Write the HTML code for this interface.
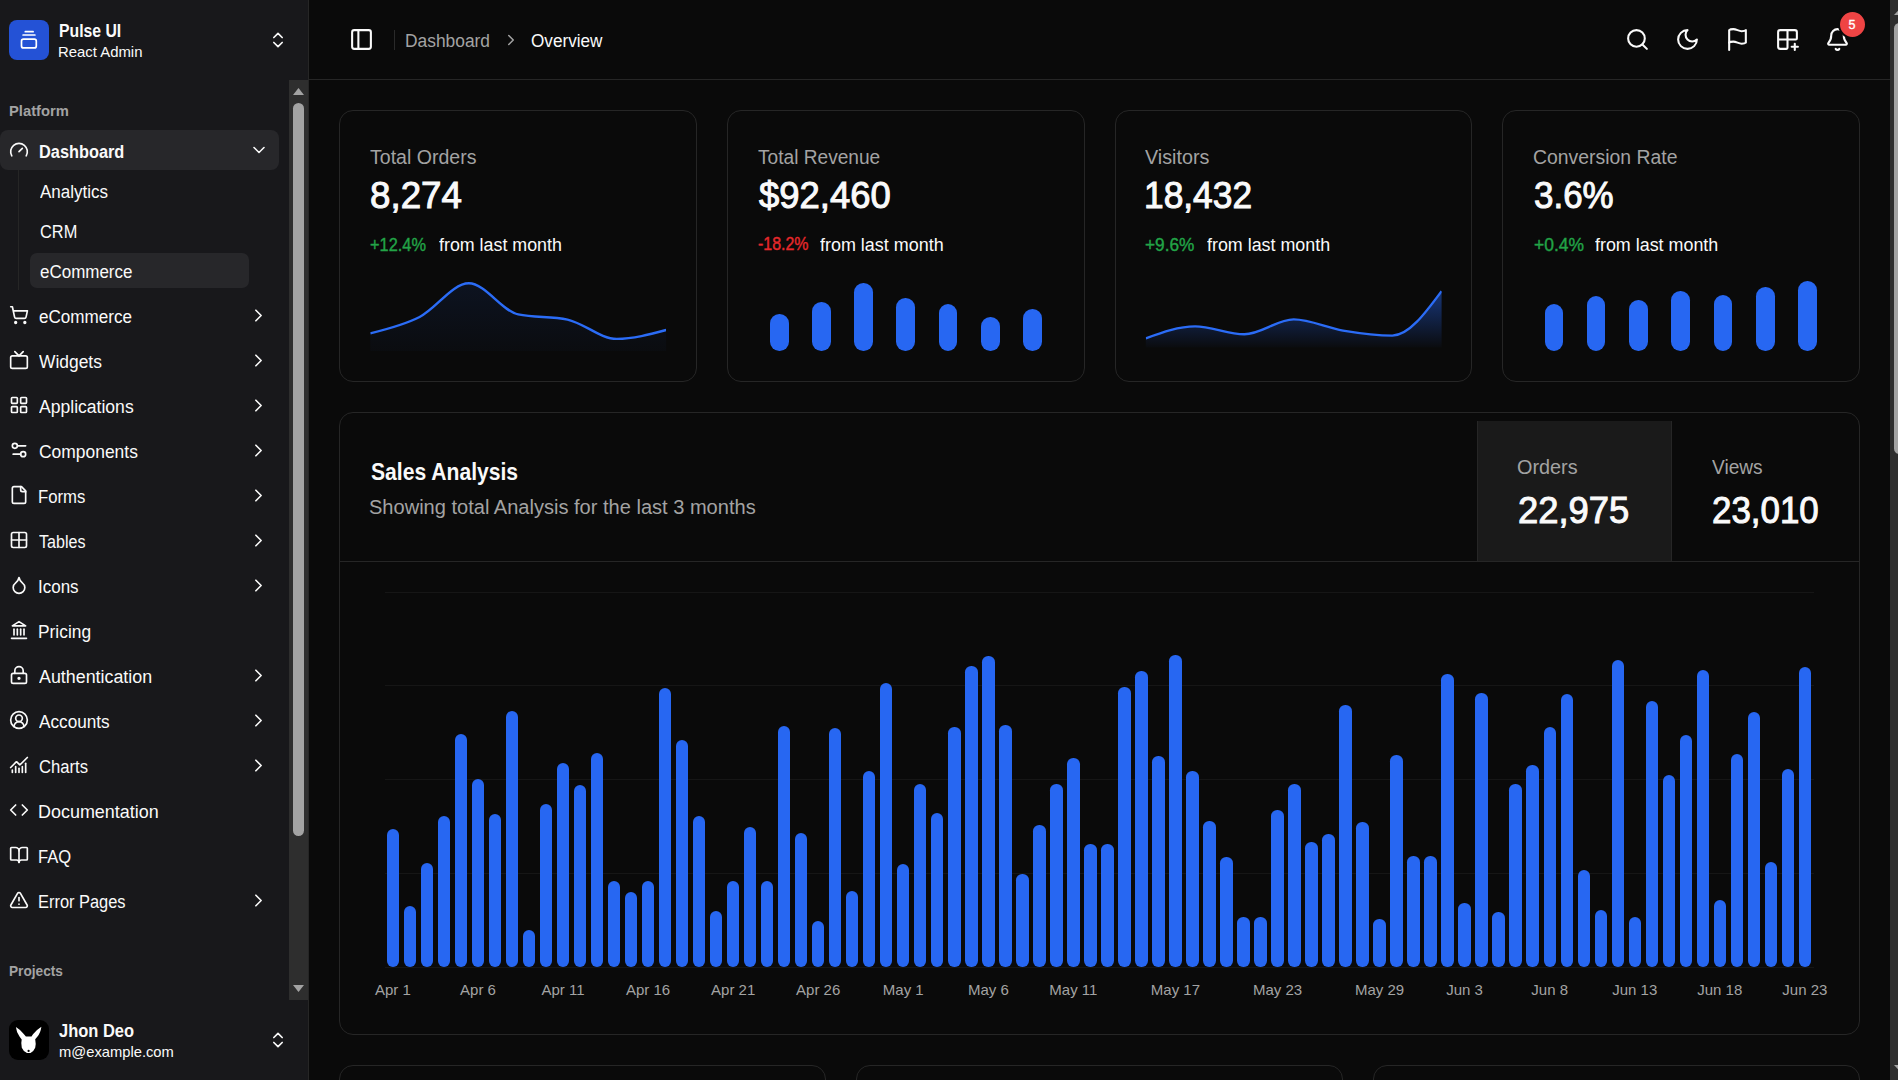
<!DOCTYPE html>
<html><head><meta charset="utf-8"><style>
html,body{margin:0;padding:0;width:1898px;height:1080px;overflow:hidden;background:#0a0a0a;}
body{position:relative;font-family:"Liberation Sans",sans-serif;}
.t{position:absolute;line-height:1;white-space:nowrap;transform-origin:0 0;}
.r{position:absolute;box-sizing:border-box;}
svg.r{overflow:visible;}
</style></head><body>
<div class="r" style="left:0px;top:0px;width:308px;height:1080px;background:#18181b;border-radius:0px;"></div>
<div class="r" style="left:308px;top:0px;width:1px;height:1080px;background:#262626;border-radius:0px;"></div>
<div class="r" style="left:9px;top:20px;width:40px;height:40px;background:#2452d6;border-radius:8px;"></div>
<svg class="r" style="left:0;top:0" width="60" height="70" fill="none" stroke="#fff" stroke-width="1.7" stroke-linecap="round"><path d="M25.3 31.7H33.1"/><path d="M23.1 35H34.9"/><rect x="21.5" y="39.2" width="14.8" height="8.7" rx="2"/></svg>
<div id="logo1" class="t" style="left:59.10px;top:21.56px;font-size:18px;font-weight:700;color:#fafafa;transform:scaleX(0.8763);">Pulse UI</div>
<div id="logo2" class="t" style="left:57.97px;top:45.33px;font-size:14.5px;font-weight:400;color:#fafafa;transform:scaleX(1.0274);">React Admin</div>
<svg class="r" style="left:268.1px;top:30px;" width="20" height="20" viewBox="0 0 24 24" fill="none" stroke="#fafafa" stroke-width="2" stroke-linecap="round" stroke-linejoin="round"><path d="m7 15 5 5 5-5"/><path d="m7 9 5-5 5 5"/></svg>
<div id="plat" class="t" style="left:8.82px;top:103.30px;font-size:15px;font-weight:700;color:#a3a3a3;transform:scaleX(0.9833);">Platform</div>
<div class="r" style="left:0px;top:130px;width:279px;height:40px;background:#27272a;border-radius:8px;"></div>
<svg class="r" style="left:9px;top:140px;" width="20" height="20" viewBox="0 0 24 24" fill="none" stroke="#fafafa" stroke-width="2" stroke-linecap="round" stroke-linejoin="round"><path d="m12 14 4-4"/><path d="M3.34 19a10 10 0 1 1 17.32 0"/></svg>
<div id="dash" class="t" style="left:39.43px;top:142.76px;font-size:18px;font-weight:700;color:#fafafa;transform:scaleX(0.9077);">Dashboard</div>
<svg class="r" style="left:249px;top:139.9px;" width="20" height="20" viewBox="0 0 24 24" fill="none" stroke="#fafafa" stroke-width="1.9" stroke-linecap="round" stroke-linejoin="round"><path d="m6 9 6 6 6-6"/></svg>
<div class="r" style="left:18px;top:170px;width:1px;height:120px;background:#262626;border-radius:0px;"></div>
<div id="an" class="t" style="left:39.88px;top:182.76px;font-size:18px;font-weight:400;color:#fafafa;transform:scaleX(0.9444);">Analytics</div>
<div id="crm" class="t" style="left:39.97px;top:222.76px;font-size:18px;font-weight:400;color:#fafafa;transform:scaleX(0.9095);">CRM</div>
<div class="r" style="left:30px;top:253px;width:219px;height:35px;background:#27272a;border-radius:7px;"></div>
<div id="ecs" class="t" style="left:39.88px;top:262.76px;font-size:18px;font-weight:400;color:#fafafa;transform:scaleX(0.9430);">eCommerce</div>
<svg class="r" style="left:9px;top:305px;" width="20" height="20" viewBox="0 0 24 24" fill="none" stroke="#fafafa" stroke-width="2" stroke-linecap="round" stroke-linejoin="round"><circle cx="8" cy="21" r="1"/><circle cx="19" cy="21" r="1"/><path d="M2.05 2.05h2l2.66 12.42a2 2 0 0 0 2 1.58h9.78a2 2 0 0 0 1.95-1.57l1.65-7.43H5.12"/></svg>
<div id="nav0" class="t" style="left:39.30px;top:307.76px;font-size:18px;font-weight:400;color:#fafafa;transform:scaleX(0.9491);">eCommerce</div>
<svg class="r" style="left:248.2px;top:304.75px;" width="21" height="21" viewBox="0 0 24 24" fill="none" stroke="#fafafa" stroke-width="1.9" stroke-linecap="round" stroke-linejoin="round"><path d="m9 18 6-6-6-6"/></svg>
<svg class="r" style="left:9px;top:350px;" width="20" height="20" viewBox="0 0 24 24" fill="none" stroke="#fafafa" stroke-width="2" stroke-linecap="round" stroke-linejoin="round"><rect width="20" height="15" x="2" y="7" rx="2" ry="2"/><polyline points="17 2 12 7 7 2"/></svg>
<div id="nav1" class="t" style="left:39.30px;top:352.76px;font-size:18px;font-weight:400;color:#fafafa;transform:scaleX(0.9665);">Widgets</div>
<svg class="r" style="left:248.2px;top:349.75px;" width="21" height="21" viewBox="0 0 24 24" fill="none" stroke="#fafafa" stroke-width="1.9" stroke-linecap="round" stroke-linejoin="round"><path d="m9 18 6-6-6-6"/></svg>
<svg class="r" style="left:9px;top:395px;" width="20" height="20" viewBox="0 0 24 24" fill="none" stroke="#fafafa" stroke-width="2" stroke-linecap="round" stroke-linejoin="round"><rect width="7" height="7" x="3" y="3" rx="1"/><rect width="7" height="7" x="14" y="3" rx="1"/><rect width="7" height="7" x="14" y="14" rx="1"/><rect width="7" height="7" x="3" y="14" rx="1"/></svg>
<div id="nav2" class="t" style="left:39.29px;top:397.76px;font-size:18px;font-weight:400;color:#fafafa;transform:scaleX(0.9753);">Applications</div>
<svg class="r" style="left:248.2px;top:394.75px;" width="21" height="21" viewBox="0 0 24 24" fill="none" stroke="#fafafa" stroke-width="1.9" stroke-linecap="round" stroke-linejoin="round"><path d="m9 18 6-6-6-6"/></svg>
<svg class="r" style="left:9px;top:440px;" width="20" height="20" viewBox="0 0 24 24" fill="none" stroke="#fafafa" stroke-width="2" stroke-linecap="round" stroke-linejoin="round"><path d="M20 7h-9"/><path d="M14 17H5"/><circle cx="17" cy="17" r="3"/><circle cx="7" cy="7" r="3"/></svg>
<div id="nav3" class="t" style="left:39.30px;top:442.76px;font-size:18px;font-weight:400;color:#fafafa;transform:scaleX(0.9688);">Components</div>
<svg class="r" style="left:248.2px;top:439.75px;" width="21" height="21" viewBox="0 0 24 24" fill="none" stroke="#fafafa" stroke-width="1.9" stroke-linecap="round" stroke-linejoin="round"><path d="m9 18 6-6-6-6"/></svg>
<svg class="r" style="left:9px;top:485px;" width="20" height="20" viewBox="0 0 24 24" fill="none" stroke="#fafafa" stroke-width="2" stroke-linecap="round" stroke-linejoin="round"><path d="M15 2H6a2 2 0 0 0-2 2v16a2 2 0 0 0 2 2h12a2 2 0 0 0 2-2V7Z"/><path d="M14 2v4a2 2 0 0 0 2 2h4"/></svg>
<div id="nav4" class="t" style="left:38.36px;top:487.76px;font-size:18px;font-weight:400;color:#fafafa;transform:scaleX(0.9285);">Forms</div>
<svg class="r" style="left:248.2px;top:484.75px;" width="21" height="21" viewBox="0 0 24 24" fill="none" stroke="#fafafa" stroke-width="1.9" stroke-linecap="round" stroke-linejoin="round"><path d="m9 18 6-6-6-6"/></svg>
<svg class="r" style="left:9px;top:530px;" width="20" height="20" viewBox="0 0 24 24" fill="none" stroke="#fafafa" stroke-width="2" stroke-linecap="round" stroke-linejoin="round"><rect width="18" height="18" x="3" y="3" rx="2"/><path d="M3 12h18"/><path d="M12 3v18"/></svg>
<div id="nav5" class="t" style="left:39.29px;top:532.76px;font-size:18px;font-weight:400;color:#fafafa;transform:scaleX(0.8928);">Tables</div>
<svg class="r" style="left:248.2px;top:529.75px;" width="21" height="21" viewBox="0 0 24 24" fill="none" stroke="#fafafa" stroke-width="1.9" stroke-linecap="round" stroke-linejoin="round"><path d="m9 18 6-6-6-6"/></svg>
<svg class="r" style="left:9px;top:575px;" width="20" height="20" viewBox="0 0 24 24" fill="none" stroke="#fafafa" stroke-width="2" stroke-linecap="round" stroke-linejoin="round"><path d="M12 22a7 7 0 0 0 7-7c0-2-1-3.9-3-5.5s-3.5-4-4-6.5c-.5 2.5-2 4.9-4 6.5C6 11.1 5 13 5 15a7 7 0 0 0 7 7z"/></svg>
<div id="nav6" class="t" style="left:38.36px;top:577.76px;font-size:18px;font-weight:400;color:#fafafa;transform:scaleX(0.9434);">Icons</div>
<svg class="r" style="left:248.2px;top:574.75px;" width="21" height="21" viewBox="0 0 24 24" fill="none" stroke="#fafafa" stroke-width="1.9" stroke-linecap="round" stroke-linejoin="round"><path d="m9 18 6-6-6-6"/></svg>
<svg class="r" style="left:9px;top:620px;" width="20" height="20" viewBox="0 0 24 24" fill="none" stroke="#fafafa" stroke-width="2" stroke-linecap="round" stroke-linejoin="round"><line x1="3" x2="21" y1="22" y2="22"/><line x1="6" x2="6" y1="18" y2="11"/><line x1="10" x2="10" y1="18" y2="11"/><line x1="14" x2="14" y1="18" y2="11"/><line x1="18" x2="18" y1="18" y2="11"/><polygon points="12 2 20 7 4 7"/></svg>
<div id="nav7" class="t" style="left:38.32px;top:622.76px;font-size:18px;font-weight:400;color:#fafafa;transform:scaleX(0.9640);">Pricing</div>
<svg class="r" style="left:9px;top:665px;" width="20" height="20" viewBox="0 0 24 24" fill="none" stroke="#fafafa" stroke-width="2" stroke-linecap="round" stroke-linejoin="round"><circle cx="12" cy="16" r="1"/><rect x="3" y="10" width="18" height="12" rx="2"/><path d="M7 10V7a5 5 0 0 1 10 0v3"/></svg>
<div id="nav8" class="t" style="left:39.30px;top:667.76px;font-size:18px;font-weight:400;color:#fafafa;transform:scaleX(0.9912);">Authentication</div>
<svg class="r" style="left:248.2px;top:664.75px;" width="21" height="21" viewBox="0 0 24 24" fill="none" stroke="#fafafa" stroke-width="1.9" stroke-linecap="round" stroke-linejoin="round"><path d="m9 18 6-6-6-6"/></svg>
<svg class="r" style="left:9px;top:710px;" width="20" height="20" viewBox="0 0 24 24" fill="none" stroke="#fafafa" stroke-width="2" stroke-linecap="round" stroke-linejoin="round"><path d="M18 20a6 6 0 0 0-12 0"/><circle cx="12" cy="10" r="4"/><circle cx="12" cy="12" r="10"/></svg>
<div id="nav9" class="t" style="left:39.30px;top:712.76px;font-size:18px;font-weight:400;color:#fafafa;transform:scaleX(0.9543);">Accounts</div>
<svg class="r" style="left:248.2px;top:709.75px;" width="21" height="21" viewBox="0 0 24 24" fill="none" stroke="#fafafa" stroke-width="1.9" stroke-linecap="round" stroke-linejoin="round"><path d="m9 18 6-6-6-6"/></svg>
<svg class="r" style="left:9px;top:755px;" width="20" height="20" viewBox="0 0 24 24" fill="none" stroke="#fafafa" stroke-width="2" stroke-linecap="round" stroke-linejoin="round"><path d="M12 16v5"/><path d="M16 14v7"/><path d="M20 10v11"/><path d="m22 3-8.646 8.646a.5.5 0 0 1-.708 0L9.354 8.354a.5.5 0 0 0-.707 0L2 15"/><path d="M4 18v3"/><path d="M8 14v7"/></svg>
<div id="nav10" class="t" style="left:39.29px;top:757.76px;font-size:18px;font-weight:400;color:#fafafa;transform:scaleX(0.9245);">Charts</div>
<svg class="r" style="left:248.2px;top:754.75px;" width="21" height="21" viewBox="0 0 24 24" fill="none" stroke="#fafafa" stroke-width="1.9" stroke-linecap="round" stroke-linejoin="round"><path d="m9 18 6-6-6-6"/></svg>
<svg class="r" style="left:9px;top:800px;" width="20" height="20" viewBox="0 0 24 24" fill="none" stroke="#fafafa" stroke-width="2" stroke-linecap="round" stroke-linejoin="round"><polyline points="16 18 22 12 16 6"/><polyline points="8 6 2 12 8 18"/></svg>
<div id="nav11" class="t" style="left:38.30px;top:802.76px;font-size:18px;font-weight:400;color:#fafafa;transform:scaleX(0.9967);">Documentation</div>
<svg class="r" style="left:9px;top:845px;" width="20" height="20" viewBox="0 0 24 24" fill="none" stroke="#fafafa" stroke-width="2" stroke-linecap="round" stroke-linejoin="round"><path d="M12 7v14"/><path d="M3 18a1 1 0 0 1-1-1V4a1 1 0 0 1 1-1h5a4 4 0 0 1 4 4 4 4 0 0 1 4-4h5a1 1 0 0 1 1 1v13a1 1 0 0 1-1 1h-6a3 3 0 0 0-3 3 3 3 0 0 0-3-3z"/></svg>
<div id="nav12" class="t" style="left:38.37px;top:847.76px;font-size:18px;font-weight:400;color:#fafafa;transform:scaleX(0.9204);">FAQ</div>
<svg class="r" style="left:9px;top:890px;" width="20" height="20" viewBox="0 0 24 24" fill="none" stroke="#fafafa" stroke-width="2" stroke-linecap="round" stroke-linejoin="round"><path d="m21.73 18-8-14a2 2 0 0 0-3.48 0l-8 14A2 2 0 0 0 4 21h16a2 2 0 0 0 1.73-3"/><path d="M12 9v4"/><path d="M12 17h.01"/></svg>
<div id="nav13" class="t" style="left:38.38px;top:892.76px;font-size:18px;font-weight:400;color:#fafafa;transform:scaleX(0.9117);">Error Pages</div>
<svg class="r" style="left:248.2px;top:889.75px;" width="21" height="21" viewBox="0 0 24 24" fill="none" stroke="#fafafa" stroke-width="1.9" stroke-linecap="round" stroke-linejoin="round"><path d="m9 18 6-6-6-6"/></svg>
<div id="proj" class="t" style="left:9.07px;top:963.30px;font-size:15px;font-weight:700;color:#a3a3a3;transform:scaleX(0.9109);">Projects</div>
<div class="r" style="left:289px;top:80px;width:19px;height:920px;background:#2e2e2e;border-radius:0px;"></div>
<svg class="r" style="left:289px;top:80px" width="19" height="20"><polygon points="4,15 9.5,8 15,15" fill="#a3a3a3"/></svg>
<div class="r" style="left:293px;top:103px;width:11px;height:733px;background:#a3a3a3;border-radius:6px;"></div>
<svg class="r" style="left:289px;top:980px" width="19" height="20"><polygon points="4,5 9.5,12 15,5" fill="#a3a3a3"/></svg>
<div class="r" style="left:9.4px;top:1020.1px;width:39.4px;height:39.6px;background:#000;border-radius:9px;"></div>
<svg class="r" style="left:9.4px;top:1020.1px" width="40" height="40"><path d="M6.9,6.9 Q12,10 14.5,13.8 L16.9,16.6 L22.5,16.6 L24,14.2 Q28,9.5 32.4,6.8 Q31.5,13 28.5,16.5 L26.2,19.2 Q27.2,24 26.2,27.8 Q24.5,31.8 21.5,33.1 L18,33.1 Q14.5,31.8 12.8,27.8 Q11.8,23 12.7,19.5 L10.5,16.5 Q7.5,12.5 6.9,6.9 Z" fill="#fff"/><circle cx="19.6" cy="30.9" r="1.1" fill="#000"/></svg>
<div id="user1" class="t" style="left:59.00px;top:1021.76px;font-size:18px;font-weight:700;color:#fafafa;transform:scaleX(0.9146);">Jhon Deo</div>
<div id="user2" class="t" style="left:59.00px;top:1045.13px;font-size:14.5px;font-weight:400;color:#fafafa;transform:scaleX(1.0160);">m@example.com</div>
<svg class="r" style="left:267.9px;top:1030.2px;" width="20" height="20" viewBox="0 0 24 24" fill="none" stroke="#fafafa" stroke-width="2" stroke-linecap="round" stroke-linejoin="round"><path d="m7 15 5 5 5-5"/><path d="m7 9 5-5 5 5"/></svg>
<div class="r" style="left:309px;top:79px;width:1581px;height:1px;background:#262626;border-radius:0px;"></div>
<svg class="r" style="left:349px;top:27px;" width="25" height="25" viewBox="0 0 24 24" fill="none" stroke="#fafafa" stroke-width="2" stroke-linecap="round" stroke-linejoin="round"><rect width="18" height="18" x="3" y="3" rx="2"/><path d="M9 3v18"/></svg>
<div class="r" style="left:394px;top:30px;width:1px;height:20px;background:#2a2a2a;border-radius:0px;"></div>
<div id="bc1" class="t" style="left:405.03px;top:31.76px;font-size:18px;font-weight:400;color:#a3a3a3;transform:scaleX(0.9651);">Dashboard</div>
<svg class="r" style="left:502px;top:30.6px;" width="18" height="18" viewBox="0 0 24 24" fill="none" stroke="#a3a3a3" stroke-width="2" stroke-linecap="round" stroke-linejoin="round"><path d="m9 18 6-6-6-6"/></svg>
<div id="bc2" class="t" style="left:531.41px;top:31.76px;font-size:18px;font-weight:400;color:#fafafa;transform:scaleX(0.9522);">Overview</div>
<svg class="r" style="left:1625.0px;top:27px;" width="25" height="25" viewBox="0 0 24 24" fill="none" stroke="#fafafa" stroke-width="2" stroke-linecap="round" stroke-linejoin="round"><circle cx="11" cy="11" r="8"/><path d="m21 21-4.3-4.3"/></svg>
<svg class="r" style="left:1675.0px;top:27px;" width="25" height="25" viewBox="0 0 24 24" fill="none" stroke="#fafafa" stroke-width="2" stroke-linecap="round" stroke-linejoin="round"><path d="M12 3a6 6 0 0 0 9 9 9 9 0 1 1-9-9Z"/></svg>
<svg class="r" style="left:1724.5px;top:27px;" width="25" height="25" viewBox="0 0 24 24" fill="none" stroke="#fafafa" stroke-width="2" stroke-linecap="round" stroke-linejoin="round"><path d="M4 15s1-1 4-1 5 2 8 2 4-1 4-1V3s-1 1-4 1-5-2-8-2-4 1-4 1z"/><path d="M4 22v-7"/></svg>
<svg class="r" style="left:1774.5px;top:27px;" width="25" height="25" viewBox="0 0 24 24" fill="none" stroke="#fafafa" stroke-width="2" stroke-linecap="round" stroke-linejoin="round"><path d="M12 3v17a1 1 0 0 1-1 1H5a2 2 0 0 1-2-2V5a2 2 0 0 1 2-2h14a2 2 0 0 1 2 2v6a1 1 0 0 1-1 1H3"/><path d="M16 19h6"/><path d="M19 22v-6"/></svg>
<svg class="r" style="left:1825.0px;top:27px;" width="25" height="25" viewBox="0 0 24 24" fill="none" stroke="#fafafa" stroke-width="2" stroke-linecap="round" stroke-linejoin="round"><path d="M10.268 21a2 2 0 0 0 3.464 0"/><path d="M3.262 15.326A1 1 0 0 0 4 17h16a1 1 0 0 0 .74-1.673C19.41 13.956 18 12.499 18 8A6 6 0 0 0 6 8c0 4.499-1.411 5.956-2.738 7.326"/></svg>
<div class="r" style="left:1838px;top:10px;width:29px;height:29px;border-radius:50%;background:#ef4444;border:2px solid #0a0a0a;"></div>
<div id="badge" class="t" style="left:1848.40px;top:18.62px;font-size:12.5px;font-weight:400;color:#fff;-webkit-text-stroke:0.35px #fff;">5</div>
<div class="r" style="left:1890px;top:0px;width:8px;height:1080px;background:#2e2e2e;border-radius:0px;"></div>
<div class="r" style="left:1894px;top:23px;width:11px;height:431px;background:#a3a3a3;border-radius:6px;"></div>
<svg class="r" style="left:1890px;top:0px" width="8" height="1080"><polygon points="4,15 9.5,9 15,15" fill="#a3a3a3"/><polygon points="4,1065 9.5,1071 15,1065" fill="#a3a3a3"/></svg>
<div class="r" style="left:339.00px;top:110px;width:357.75px;height:272px;border:1px solid #262626;border-radius:14px;"></div>
<div class="r" style="left:726.75px;top:110px;width:357.75px;height:272px;border:1px solid #262626;border-radius:14px;"></div>
<div class="r" style="left:1114.50px;top:110px;width:357.75px;height:272px;border:1px solid #262626;border-radius:14px;"></div>
<div class="r" style="left:1502.25px;top:110px;width:357.75px;height:272px;border:1px solid #262626;border-radius:14px;"></div>
<div id="st0" class="t" style="left:370.21px;top:148.49px;font-size:19.5px;font-weight:400;color:#a3a3a3;transform:scaleX(1.0020);">Total Orders</div>
<div id="sv0" class="t" style="left:370.21px;top:177.08px;font-size:37px;font-weight:400;color:#fafafa;transform:scaleX(0.9925);-webkit-text-stroke:1px #fafafa;">8,274</div>
<div id="sd0" class="t" style="left:370.25px;top:236.36px;font-size:18px;font-weight:400;color:#22a447;transform:scaleX(0.9086);-webkit-text-stroke:0.4px #22a447;">+12.4%</div>
<div id="sf0" class="t" style="left:439.38px;top:236.36px;font-size:18px;font-weight:400;color:#fafafa;transform:scaleX(0.9905);">from last month</div>
<div id="st1" class="t" style="left:758.00px;top:148.49px;font-size:19.5px;font-weight:400;color:#a3a3a3;transform:scaleX(0.9807);">Total Revenue</div>
<div id="sv1" class="t" style="left:759.01px;top:177.08px;font-size:37px;font-weight:400;color:#fafafa;transform:scaleX(0.9858);-webkit-text-stroke:1px #fafafa;">$92,460</div>
<div id="sd1" class="t" style="left:758.09px;top:235.36px;font-size:18px;font-weight:400;color:#e5282b;transform:scaleX(0.8865);-webkit-text-stroke:0.4px #e5282b;">-18.2%</div>
<div id="sf1" class="t" style="left:820.38px;top:236.36px;font-size:18px;font-weight:400;color:#fafafa;transform:scaleX(0.9969);">from last month</div>
<div id="st2" class="t" style="left:1145.40px;top:148.49px;font-size:19.5px;font-weight:400;color:#a3a3a3;transform:scaleX(1.0128);">Visitors</div>
<div id="sv2" class="t" style="left:1144.46px;top:177.08px;font-size:37px;font-weight:400;color:#fafafa;transform:scaleX(0.9550);-webkit-text-stroke:1px #fafafa;">18,432</div>
<div id="sd2" class="t" style="left:1145.41px;top:236.36px;font-size:18px;font-weight:400;color:#22a447;transform:scaleX(0.9570);-webkit-text-stroke:0.4px #22a447;">+9.6%</div>
<div id="sf2" class="t" style="left:1207.00px;top:236.36px;font-size:18px;font-weight:400;color:#fafafa;transform:scaleX(0.9921);">from last month</div>
<div id="st3" class="t" style="left:1532.80px;top:148.49px;font-size:19.5px;font-weight:400;color:#a3a3a3;transform:scaleX(0.9945);">Conversion Rate</div>
<div id="sv3" class="t" style="left:1533.83px;top:177.08px;font-size:37px;font-weight:400;color:#fafafa;transform:scaleX(0.9447);-webkit-text-stroke:1px #fafafa;">3.6%</div>
<div id="sd3" class="t" style="left:1533.82px;top:236.36px;font-size:18px;font-weight:400;color:#22a447;transform:scaleX(0.9690);-webkit-text-stroke:0.4px #22a447;">+0.4%</div>
<div id="sf3" class="t" style="left:1595.09px;top:236.36px;font-size:18px;font-weight:400;color:#fafafa;transform:scaleX(0.9936);">from last month</div>
<svg class="r" style="left:0;top:0" width="1898" height="400"><defs><linearGradient id="g1" x1="0" y1="0" x2="0" y2="1"><stop offset="0%" stop-color="#2563eb" stop-opacity="0.1"/><stop offset="100%" stop-color="#2563eb" stop-opacity="0.025"/></linearGradient><clipPath id="cg1"><rect x="370.3" y="200" width="295.8" height="200"/></clipPath></defs><path d="M370.30,333.30 C386.73,329.32 403.17,325.33 419.60,317.00 C436.03,308.67 452.47,283.30 468.90,283.30 C485.33,283.30 501.77,310.93 518.20,314.40 C534.63,317.87 551.07,316.13 567.50,319.60 C583.93,323.07 600.37,338.90 616.80,338.90 C633.23,338.90 649.67,334.45 666.10,330.00 L666.10,351 L370.30,351 Z" fill="url(#g1)"/><path d="M370.30,333.30 C386.73,329.32 403.17,325.33 419.60,317.00 C436.03,308.67 452.47,283.30 468.90,283.30 C485.33,283.30 501.77,310.93 518.20,314.40 C534.63,317.87 551.07,316.13 567.50,319.60 C583.93,323.07 600.37,338.90 616.80,338.90 C633.23,338.90 649.67,334.45 666.10,330.00" stroke="#2b6cf6" stroke-width="2.4" fill="none" clip-path="url(#cg1)"/></svg>
<svg class="r" style="left:0;top:0" width="1898" height="400"><defs><linearGradient id="g2" x1="0" y1="0" x2="0" y2="1"><stop offset="0%" stop-color="#2563eb" stop-opacity="0.5"/><stop offset="100%" stop-color="#2563eb" stop-opacity="0.02"/></linearGradient><clipPath id="cg2"><rect x="1145.8" y="200" width="295.79999999999995" height="200"/></clipPath></defs><path d="M1145.80,338.30 C1162.23,332.35 1178.67,326.40 1195.10,326.40 C1211.53,326.40 1227.97,334.20 1244.40,334.20 C1260.83,334.20 1277.27,319.40 1293.70,319.40 C1310.13,319.40 1326.57,327.90 1343.00,330.60 C1359.43,333.30 1375.87,335.60 1392.30,335.60 C1408.73,335.60 1425.17,313.35 1441.60,291.10 L1441.60,347.5 L1145.80,347.5 Z" fill="url(#g2)"/><path d="M1145.80,338.30 C1162.23,332.35 1178.67,326.40 1195.10,326.40 C1211.53,326.40 1227.97,334.20 1244.40,334.20 C1260.83,334.20 1277.27,319.40 1293.70,319.40 C1310.13,319.40 1326.57,327.90 1343.00,330.60 C1359.43,333.30 1375.87,335.60 1392.30,335.60 C1408.73,335.60 1425.17,313.35 1441.60,291.10" stroke="#2b6cf6" stroke-width="2.4" fill="none" clip-path="url(#cg2)"/></svg>
<div class="r" style="left:770.00px;top:313.90px;width:18.6px;height:36.90px;background:#2767f2;border-radius:9.30px"></div>
<div class="r" style="left:812.20px;top:302.00px;width:18.6px;height:48.80px;background:#2767f2;border-radius:9.30px"></div>
<div class="r" style="left:854.20px;top:282.50px;width:18.6px;height:68.30px;background:#2767f2;border-radius:9.30px"></div>
<div class="r" style="left:896.40px;top:297.80px;width:18.6px;height:53.00px;background:#2767f2;border-radius:9.30px"></div>
<div class="r" style="left:938.60px;top:303.60px;width:18.6px;height:47.20px;background:#2767f2;border-radius:9.30px"></div>
<div class="r" style="left:981.10px;top:316.70px;width:18.6px;height:34.10px;background:#2767f2;border-radius:9.30px"></div>
<div class="r" style="left:1023.30px;top:308.90px;width:18.6px;height:41.90px;background:#2767f2;border-radius:9.30px"></div>
<div class="r" style="left:1544.70px;top:304.20px;width:18.6px;height:46.60px;background:#2767f2;border-radius:9.30px"></div>
<div class="r" style="left:1586.90px;top:296.40px;width:18.6px;height:54.40px;background:#2767f2;border-radius:9.30px"></div>
<div class="r" style="left:1629.20px;top:300.00px;width:18.6px;height:50.80px;background:#2767f2;border-radius:9.30px"></div>
<div class="r" style="left:1671.40px;top:290.80px;width:18.6px;height:60.00px;background:#2767f2;border-radius:9.30px"></div>
<div class="r" style="left:1713.90px;top:295.00px;width:18.6px;height:55.80px;background:#2767f2;border-radius:9.30px"></div>
<div class="r" style="left:1756.10px;top:286.90px;width:18.6px;height:63.90px;background:#2767f2;border-radius:9.30px"></div>
<div class="r" style="left:1798.30px;top:280.80px;width:18.6px;height:70.00px;background:#2767f2;border-radius:9.30px"></div>
<div class="r" style="left:339px;top:412px;width:1521px;height:623px;border:1px solid #262626;border-radius:14px;"></div>
<div class="r" style="left:1477px;top:421px;width:194px;height:140px;background:#1a1a1a;border-radius:0px;"></div>
<div class="r" style="left:1477px;top:421px;width:1px;height:140px;background:#262626;border-radius:0px;"></div>
<div class="r" style="left:1671px;top:421px;width:1px;height:140px;background:#262626;border-radius:0px;"></div>
<div class="r" style="left:340px;top:561px;width:1519px;height:1px;background:#262626;border-radius:0px;"></div>
<div id="sa1" class="t" style="left:370.56px;top:459.68px;font-size:24px;font-weight:700;color:#fafafa;transform:scaleX(0.8796);">Sales Analysis</div>
<div id="sa2" class="t" style="left:369.48px;top:497.58px;font-size:19.4px;font-weight:400;color:#a3a3a3;transform:scaleX(1.0338);">Showing total Analysis for the last 3 months</div>
<div id="or1" class="t" style="left:1516.98px;top:457.69px;font-size:19.5px;font-weight:400;color:#a3a3a3;transform:scaleX(1.0172);">Orders</div>
<div id="or2" class="t" style="left:1518.22px;top:491.88px;font-size:37px;font-weight:400;color:#fafafa;transform:scaleX(0.9831);-webkit-text-stroke:1px #fafafa;">22,975</div>
<div id="vw1" class="t" style="left:1712.11px;top:457.69px;font-size:19.5px;font-weight:400;color:#a3a3a3;transform:scaleX(0.9804);">Views</div>
<div id="vw2" class="t" style="left:1712.40px;top:491.88px;font-size:37px;font-weight:400;color:#fafafa;transform:scaleX(0.9430);-webkit-text-stroke:1px #fafafa;">23,010</div>
<div class="r" style="left:385px;top:592px;width:1429px;height:1px;background:#161616;border-radius:0px;"></div>
<div class="r" style="left:385px;top:685px;width:1429px;height:1px;background:#161616;border-radius:0px;"></div>
<div class="r" style="left:385px;top:779px;width:1429px;height:1px;background:#161616;border-radius:0px;"></div>
<div class="r" style="left:385px;top:873px;width:1429px;height:1px;background:#161616;border-radius:0px;"></div>
<div class="r" style="left:385px;top:967px;width:1429px;height:1px;background:#161616;border-radius:0px;"></div>
<div class="r" style="left:386.75px;top:828.50px;width:12.4px;height:138.30px;background:#2767f2;border-radius:6.2px"></div>
<div class="r" style="left:403.76px;top:906.40px;width:12.4px;height:60.40px;background:#2767f2;border-radius:6.2px"></div>
<div class="r" style="left:420.77px;top:863.00px;width:12.4px;height:103.80px;background:#2767f2;border-radius:6.2px"></div>
<div class="r" style="left:437.78px;top:816.00px;width:12.4px;height:150.80px;background:#2767f2;border-radius:6.2px"></div>
<div class="r" style="left:454.79px;top:734.00px;width:12.4px;height:232.80px;background:#2767f2;border-radius:6.2px"></div>
<div class="r" style="left:471.81px;top:779.00px;width:12.4px;height:187.80px;background:#2767f2;border-radius:6.2px"></div>
<div class="r" style="left:488.82px;top:814.00px;width:12.4px;height:152.80px;background:#2767f2;border-radius:6.2px"></div>
<div class="r" style="left:505.83px;top:711.00px;width:12.4px;height:255.80px;background:#2767f2;border-radius:6.2px"></div>
<div class="r" style="left:522.84px;top:930.00px;width:12.4px;height:36.80px;background:#2767f2;border-radius:6.2px"></div>
<div class="r" style="left:539.85px;top:804.00px;width:12.4px;height:162.80px;background:#2767f2;border-radius:6.2px"></div>
<div class="r" style="left:556.86px;top:763.00px;width:12.4px;height:203.80px;background:#2767f2;border-radius:6.2px"></div>
<div class="r" style="left:573.87px;top:785.00px;width:12.4px;height:181.80px;background:#2767f2;border-radius:6.2px"></div>
<div class="r" style="left:590.88px;top:753.00px;width:12.4px;height:213.80px;background:#2767f2;border-radius:6.2px"></div>
<div class="r" style="left:607.89px;top:881.00px;width:12.4px;height:85.80px;background:#2767f2;border-radius:6.2px"></div>
<div class="r" style="left:624.90px;top:892.00px;width:12.4px;height:74.80px;background:#2767f2;border-radius:6.2px"></div>
<div class="r" style="left:641.91px;top:881.00px;width:12.4px;height:85.80px;background:#2767f2;border-radius:6.2px"></div>
<div class="r" style="left:658.93px;top:688.00px;width:12.4px;height:278.80px;background:#2767f2;border-radius:6.2px"></div>
<div class="r" style="left:675.94px;top:740.00px;width:12.4px;height:226.80px;background:#2767f2;border-radius:6.2px"></div>
<div class="r" style="left:692.95px;top:816.00px;width:12.4px;height:150.80px;background:#2767f2;border-radius:6.2px"></div>
<div class="r" style="left:709.96px;top:911.00px;width:12.4px;height:55.80px;background:#2767f2;border-radius:6.2px"></div>
<div class="r" style="left:726.97px;top:881.00px;width:12.4px;height:85.80px;background:#2767f2;border-radius:6.2px"></div>
<div class="r" style="left:743.98px;top:827.00px;width:12.4px;height:139.80px;background:#2767f2;border-radius:6.2px"></div>
<div class="r" style="left:760.99px;top:881.00px;width:12.4px;height:85.80px;background:#2767f2;border-radius:6.2px"></div>
<div class="r" style="left:778.00px;top:726.00px;width:12.4px;height:240.80px;background:#2767f2;border-radius:6.2px"></div>
<div class="r" style="left:795.01px;top:833.00px;width:12.4px;height:133.80px;background:#2767f2;border-radius:6.2px"></div>
<div class="r" style="left:812.02px;top:920.50px;width:12.4px;height:46.30px;background:#2767f2;border-radius:6.2px"></div>
<div class="r" style="left:829.04px;top:728.00px;width:12.4px;height:238.80px;background:#2767f2;border-radius:6.2px"></div>
<div class="r" style="left:846.05px;top:891.00px;width:12.4px;height:75.80px;background:#2767f2;border-radius:6.2px"></div>
<div class="r" style="left:863.06px;top:770.50px;width:12.4px;height:196.30px;background:#2767f2;border-radius:6.2px"></div>
<div class="r" style="left:880.07px;top:683.00px;width:12.4px;height:283.80px;background:#2767f2;border-radius:6.2px"></div>
<div class="r" style="left:897.08px;top:864.00px;width:12.4px;height:102.80px;background:#2767f2;border-radius:6.2px"></div>
<div class="r" style="left:914.09px;top:784.00px;width:12.4px;height:182.80px;background:#2767f2;border-radius:6.2px"></div>
<div class="r" style="left:931.10px;top:813.00px;width:12.4px;height:153.80px;background:#2767f2;border-radius:6.2px"></div>
<div class="r" style="left:948.11px;top:726.50px;width:12.4px;height:240.30px;background:#2767f2;border-radius:6.2px"></div>
<div class="r" style="left:965.12px;top:666.00px;width:12.4px;height:300.80px;background:#2767f2;border-radius:6.2px"></div>
<div class="r" style="left:982.13px;top:656.00px;width:12.4px;height:310.80px;background:#2767f2;border-radius:6.2px"></div>
<div class="r" style="left:999.15px;top:725.00px;width:12.4px;height:241.80px;background:#2767f2;border-radius:6.2px"></div>
<div class="r" style="left:1016.16px;top:874.00px;width:12.4px;height:92.80px;background:#2767f2;border-radius:6.2px"></div>
<div class="r" style="left:1033.17px;top:825.00px;width:12.4px;height:141.80px;background:#2767f2;border-radius:6.2px"></div>
<div class="r" style="left:1050.18px;top:784.00px;width:12.4px;height:182.80px;background:#2767f2;border-radius:6.2px"></div>
<div class="r" style="left:1067.19px;top:758.00px;width:12.4px;height:208.80px;background:#2767f2;border-radius:6.2px"></div>
<div class="r" style="left:1084.20px;top:844.00px;width:12.4px;height:122.80px;background:#2767f2;border-radius:6.2px"></div>
<div class="r" style="left:1101.21px;top:844.00px;width:12.4px;height:122.80px;background:#2767f2;border-radius:6.2px"></div>
<div class="r" style="left:1118.22px;top:687.00px;width:12.4px;height:279.80px;background:#2767f2;border-radius:6.2px"></div>
<div class="r" style="left:1135.23px;top:671.00px;width:12.4px;height:295.80px;background:#2767f2;border-radius:6.2px"></div>
<div class="r" style="left:1152.24px;top:756.00px;width:12.4px;height:210.80px;background:#2767f2;border-radius:6.2px"></div>
<div class="r" style="left:1169.26px;top:655.00px;width:12.4px;height:311.80px;background:#2767f2;border-radius:6.2px"></div>
<div class="r" style="left:1186.27px;top:770.50px;width:12.4px;height:196.30px;background:#2767f2;border-radius:6.2px"></div>
<div class="r" style="left:1203.28px;top:821.00px;width:12.4px;height:145.80px;background:#2767f2;border-radius:6.2px"></div>
<div class="r" style="left:1220.29px;top:857.00px;width:12.4px;height:109.80px;background:#2767f2;border-radius:6.2px"></div>
<div class="r" style="left:1237.30px;top:916.50px;width:12.4px;height:50.30px;background:#2767f2;border-radius:6.2px"></div>
<div class="r" style="left:1254.31px;top:917.00px;width:12.4px;height:49.80px;background:#2767f2;border-radius:6.2px"></div>
<div class="r" style="left:1271.32px;top:810.00px;width:12.4px;height:156.80px;background:#2767f2;border-radius:6.2px"></div>
<div class="r" style="left:1288.33px;top:784.00px;width:12.4px;height:182.80px;background:#2767f2;border-radius:6.2px"></div>
<div class="r" style="left:1305.34px;top:842.00px;width:12.4px;height:124.80px;background:#2767f2;border-radius:6.2px"></div>
<div class="r" style="left:1322.35px;top:834.00px;width:12.4px;height:132.80px;background:#2767f2;border-radius:6.2px"></div>
<div class="r" style="left:1339.37px;top:705.00px;width:12.4px;height:261.80px;background:#2767f2;border-radius:6.2px"></div>
<div class="r" style="left:1356.38px;top:822.00px;width:12.4px;height:144.80px;background:#2767f2;border-radius:6.2px"></div>
<div class="r" style="left:1373.39px;top:919.00px;width:12.4px;height:47.80px;background:#2767f2;border-radius:6.2px"></div>
<div class="r" style="left:1390.40px;top:755.00px;width:12.4px;height:211.80px;background:#2767f2;border-radius:6.2px"></div>
<div class="r" style="left:1407.41px;top:856.00px;width:12.4px;height:110.80px;background:#2767f2;border-radius:6.2px"></div>
<div class="r" style="left:1424.42px;top:856.00px;width:12.4px;height:110.80px;background:#2767f2;border-radius:6.2px"></div>
<div class="r" style="left:1441.43px;top:674.00px;width:12.4px;height:292.80px;background:#2767f2;border-radius:6.2px"></div>
<div class="r" style="left:1458.44px;top:903.00px;width:12.4px;height:63.80px;background:#2767f2;border-radius:6.2px"></div>
<div class="r" style="left:1475.45px;top:693.00px;width:12.4px;height:273.80px;background:#2767f2;border-radius:6.2px"></div>
<div class="r" style="left:1492.46px;top:912.00px;width:12.4px;height:54.80px;background:#2767f2;border-radius:6.2px"></div>
<div class="r" style="left:1509.48px;top:784.00px;width:12.4px;height:182.80px;background:#2767f2;border-radius:6.2px"></div>
<div class="r" style="left:1526.49px;top:765.00px;width:12.4px;height:201.80px;background:#2767f2;border-radius:6.2px"></div>
<div class="r" style="left:1543.50px;top:727.00px;width:12.4px;height:239.80px;background:#2767f2;border-radius:6.2px"></div>
<div class="r" style="left:1560.51px;top:694.00px;width:12.4px;height:272.80px;background:#2767f2;border-radius:6.2px"></div>
<div class="r" style="left:1577.52px;top:870.00px;width:12.4px;height:96.80px;background:#2767f2;border-radius:6.2px"></div>
<div class="r" style="left:1594.53px;top:909.50px;width:12.4px;height:57.30px;background:#2767f2;border-radius:6.2px"></div>
<div class="r" style="left:1611.54px;top:660.00px;width:12.4px;height:306.80px;background:#2767f2;border-radius:6.2px"></div>
<div class="r" style="left:1628.55px;top:916.50px;width:12.4px;height:50.30px;background:#2767f2;border-radius:6.2px"></div>
<div class="r" style="left:1645.56px;top:701.00px;width:12.4px;height:265.80px;background:#2767f2;border-radius:6.2px"></div>
<div class="r" style="left:1662.58px;top:775.00px;width:12.4px;height:191.80px;background:#2767f2;border-radius:6.2px"></div>
<div class="r" style="left:1679.59px;top:735.00px;width:12.4px;height:231.80px;background:#2767f2;border-radius:6.2px"></div>
<div class="r" style="left:1696.60px;top:670.00px;width:12.4px;height:296.80px;background:#2767f2;border-radius:6.2px"></div>
<div class="r" style="left:1713.61px;top:900.00px;width:12.4px;height:66.80px;background:#2767f2;border-radius:6.2px"></div>
<div class="r" style="left:1730.62px;top:754.00px;width:12.4px;height:212.80px;background:#2767f2;border-radius:6.2px"></div>
<div class="r" style="left:1747.63px;top:712.00px;width:12.4px;height:254.80px;background:#2767f2;border-radius:6.2px"></div>
<div class="r" style="left:1764.64px;top:861.50px;width:12.4px;height:105.30px;background:#2767f2;border-radius:6.2px"></div>
<div class="r" style="left:1781.65px;top:769.00px;width:12.4px;height:197.80px;background:#2767f2;border-radius:6.2px"></div>
<div class="r" style="left:1798.66px;top:667.00px;width:12.4px;height:299.80px;background:#2767f2;border-radius:6.2px"></div>
<div class="t" style="left:332.95px;width:120px;text-align:center;top:982.10px;font-size:15px;color:#a3a3a3">Apr 1</div>
<div class="t" style="left:418.00px;width:120px;text-align:center;top:982.10px;font-size:15px;color:#a3a3a3">Apr 6</div>
<div class="t" style="left:503.06px;width:120px;text-align:center;top:982.10px;font-size:15px;color:#a3a3a3">Apr 11</div>
<div class="t" style="left:588.12px;width:120px;text-align:center;top:982.10px;font-size:15px;color:#a3a3a3">Apr 16</div>
<div class="t" style="left:673.17px;width:120px;text-align:center;top:982.10px;font-size:15px;color:#a3a3a3">Apr 21</div>
<div class="t" style="left:758.22px;width:120px;text-align:center;top:982.10px;font-size:15px;color:#a3a3a3">Apr 26</div>
<div class="t" style="left:843.28px;width:120px;text-align:center;top:982.10px;font-size:15px;color:#a3a3a3">May 1</div>
<div class="t" style="left:928.34px;width:120px;text-align:center;top:982.10px;font-size:15px;color:#a3a3a3">May 6</div>
<div class="t" style="left:1013.39px;width:120px;text-align:center;top:982.10px;font-size:15px;color:#a3a3a3">May 11</div>
<div class="t" style="left:1115.46px;width:120px;text-align:center;top:982.10px;font-size:15px;color:#a3a3a3">May 17</div>
<div class="t" style="left:1217.52px;width:120px;text-align:center;top:982.10px;font-size:15px;color:#a3a3a3">May 23</div>
<div class="t" style="left:1319.59px;width:120px;text-align:center;top:982.10px;font-size:15px;color:#a3a3a3">May 29</div>
<div class="t" style="left:1404.64px;width:120px;text-align:center;top:982.10px;font-size:15px;color:#a3a3a3">Jun 3</div>
<div class="t" style="left:1489.70px;width:120px;text-align:center;top:982.10px;font-size:15px;color:#a3a3a3">Jun 8</div>
<div class="t" style="left:1574.75px;width:120px;text-align:center;top:982.10px;font-size:15px;color:#a3a3a3">Jun 13</div>
<div class="t" style="left:1659.81px;width:120px;text-align:center;top:982.10px;font-size:15px;color:#a3a3a3">Jun 18</div>
<div class="t" style="left:1744.86px;width:120px;text-align:center;top:982.10px;font-size:15px;color:#a3a3a3">Jun 23</div>
<div class="r" style="left:339px;top:1065px;width:487px;height:100px;border:1px solid #262626;border-radius:14px;"></div>
<div class="r" style="left:856px;top:1065px;width:487px;height:100px;border:1px solid #262626;border-radius:14px;"></div>
<div class="r" style="left:1373px;top:1065px;width:487px;height:100px;border:1px solid #262626;border-radius:14px;"></div>
</body></html>
